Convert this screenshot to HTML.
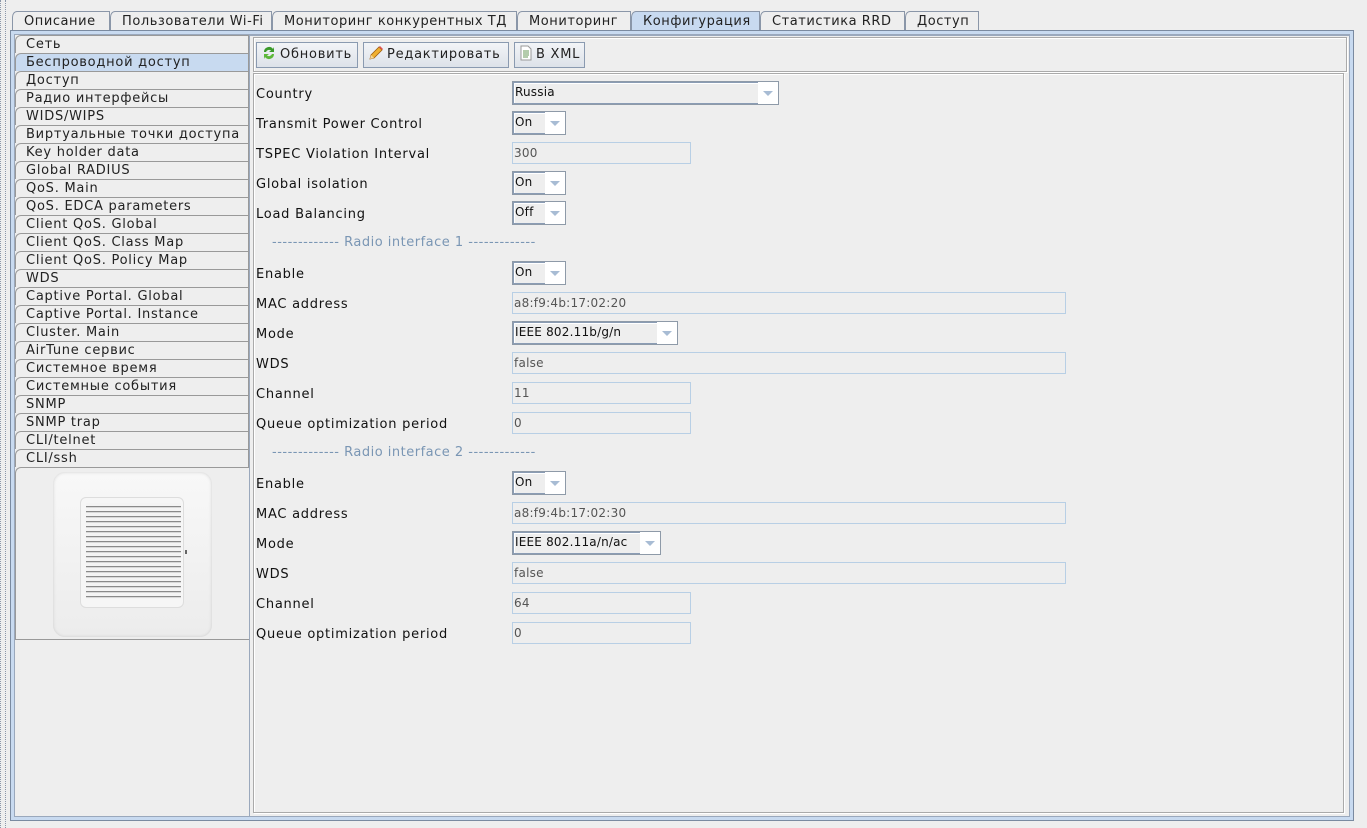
<!DOCTYPE html>
<html><head><meta charset="utf-8">
<style>
*{box-sizing:border-box;margin:0;padding:0}
body{width:1367px;height:828px;background:#eeeeee;position:relative;overflow:hidden;font-family:"DejaVu Sans","Liberation Sans",sans-serif;font-size:13px;color:#222;letter-spacing:0.75px}
.abs{position:absolute}
.dots{left:0;top:0;width:6px;height:828px;border-left:1px dotted #8a96a8;border-right:1px dotted #8a96a8}
.tab{position:absolute;top:11px;height:20px;border:1px solid #8a96a8;border-bottom:none;background:#eeeeee;font-size:13px;line-height:19px;padding-left:11px;white-space:nowrap;color:#222;border-top-left-radius:5px 6px;letter-spacing:0.55px;overflow:hidden}
.tab.sel{background:#c8daf0}
.frame{left:10px;top:30px;width:1344px;height:791px;border:1px solid #7a8aa0;background:#c8daf0}
.inner{left:14px;top:34px;width:1336px;height:783px;border:1px solid #9aa8bc;background:#eeeeee}
.tree{position:absolute;left:15px;height:18px;width:234px;border-top:1px solid #999;border-left:1px solid #999;border-right:1px solid #999;font-size:13px;line-height:17px;padding-left:10px;white-space:nowrap;border-top-left-radius:6px 6px}
.tree.sel{background:#c8daf0}
.btn{position:absolute;top:42px;height:26px;border:1px solid #8a9ab0;background:linear-gradient(#f2f4f7,#dde2e9);font-size:13px;line-height:24px;padding-left:4px;white-space:nowrap;letter-spacing:0.75px}
.btn svg{vertical-align:-3px;margin-right:3px}
.lbl{position:absolute;left:256px;font-size:13px;line-height:16px;color:#111}
.tf{position:absolute;left:512px;height:22px;border:1px solid #b8cfe5;background:#eeeeee;font-size:12px;line-height:20px;padding-left:1px;color:#555;letter-spacing:0.25px}
.cb{position:absolute;left:512px;height:24px;border:1px solid #8e9aa8;background:#fff;letter-spacing:0.2px}
.cb .t{position:absolute;left:0;top:0;bottom:0;border:1px solid #8a9cb4;border-right:1px solid #aaa;background:#eeeeee;font-size:12px;line-height:19px;padding-left:1px;color:#111;box-shadow:inset 1px 1px 0 #fff}
.cb .a{position:absolute;right:0;top:0;width:20px;height:22px;background:#fff}
.cb .a:after{content:"";position:absolute;left:5px;top:9px;border-left:5px solid transparent;border-right:5px solid transparent;border-top:5px solid #a8bcd4}
.sep{position:absolute;left:272px;font-size:13px;color:#7a96b4;white-space:pre;letter-spacing:0.5px}
</style></head><body>
<div class="abs dots"></div>

<div class="tab" style="left:12px;width:98px">Описание</div>
<div class="tab" style="left:110px;width:162px">Пользователи Wi-Fi</div>
<div class="tab" style="left:272px;width:245px">Мониторинг конкурентных ТД</div>
<div class="tab" style="left:517px;width:114px">Мониторинг</div>
<div class="tab sel" style="left:631px;width:129px">Конфигурация</div>
<div class="tab" style="left:760px;width:145px">Статистика RRD</div>
<div class="tab" style="left:905px;width:74px">Доступ</div>

<div class="abs frame"></div>
<div class="abs inner"></div>

<div class="tree" style="top:35px">Сеть</div>
<div class="tree sel" style="top:53px">Беспроводной доступ</div>
<div class="tree" style="top:71px">Доступ</div>
<div class="tree" style="top:89px">Радио интерфейсы</div>
<div class="tree" style="top:107px">WIDS/WIPS</div>
<div class="tree" style="top:125px">Виртуальные точки доступа</div>
<div class="tree" style="top:143px">Key holder data</div>
<div class="tree" style="top:161px">Global RADIUS</div>
<div class="tree" style="top:179px">QoS. Main</div>
<div class="tree" style="top:197px">QoS. EDCA parameters</div>
<div class="tree" style="top:215px">Client QoS. Global</div>
<div class="tree" style="top:233px">Client QoS. Class Map</div>
<div class="tree" style="top:251px">Client QoS. Policy Map</div>
<div class="tree" style="top:269px">WDS</div>
<div class="tree" style="top:287px">Captive Portal. Global</div>
<div class="tree" style="top:305px">Captive Portal. Instance</div>
<div class="tree" style="top:323px">Cluster. Main</div>
<div class="tree" style="top:341px">AirTune сервис</div>
<div class="tree" style="top:359px">Системное время</div>
<div class="tree" style="top:377px">Системные события</div>
<div class="tree" style="top:395px">SNMP</div>
<div class="tree" style="top:413px">SNMP trap</div>
<div class="tree" style="top:431px">CLI/telnet</div>
<div class="tree" style="top:449px">CLI/ssh</div>
<div class="abs" style="left:15px;top:467px;width:235px;height:173px;border-top:1px solid #999;border-left:1px solid #999;border-bottom:1px solid #999;border-top-left-radius:6px 6px"></div>
<div class="abs" style="left:53px;top:472px;width:159px;height:165px;border-radius:12px;background:linear-gradient(#f8f8f8,#ececec);box-shadow:inset 0 0 3px #ccc"></div>
<div class="abs" style="left:80px;top:497px;width:104px;height:111px;border-radius:6px;border:1px solid #ddd;background:#f6f6f6"></div>
<div class="abs" style="left:86px;top:503px;width:95px;height:96px;background:repeating-linear-gradient(#f4f4f4 0px,#f4f4f4 3px,#8a8a8a 3px,#8a8a8a 4px,#d8d8d8 4px,#d8d8d8 5px)"></div>
<div class="abs" style="left:185px;top:550px;width:2px;height:4px;background:#666"></div>

<div class="abs" style="left:249px;top:35px;width:1100px;height:782px;border:1px solid #9aa8bc;border-right:none"></div>
<div class="abs" style="left:253px;top:37px;width:1094px;height:35px;border:1px solid #aaa;box-shadow:inset 1px 1px 0 #fff,1px 1px 0 #fff"></div>
<div class="abs" style="left:253px;top:73px;width:1091px;height:740px;border:1px solid #aaa;box-shadow:1px 1px 0 #fff,inset 1px 1px 0 #fff"></div>

<div class="btn" style="left:256px;width:102px"><svg width="16" height="16" viewBox="0 0 16 16"><path d="M3 7a5 5 0 0 1 9-3l1-2v5h-5l2-1.5A3.3 3.3 0 0 0 5 7z" fill="#3a9a2a"/><path d="M13 9a5 5 0 0 1-9 3l-1 2V9h5l-2 1.5A3.3 3.3 0 0 0 11 9z" fill="#5cb83a"/></svg>Обновить</div>
<div class="btn" style="left:363px;width:146px"><svg width="16" height="16" viewBox="0 0 16 16"><path d="M2 14l1-4 8-8 3 3-8 8z" fill="#f0b030" stroke="#a06010" stroke-width=".8"/><path d="M2 14l1-4 3 3z" fill="#f4d8a0"/><path d="M11 2l3 3 1-1-3-3z" fill="#e05050"/></svg>Редактировать</div>
<div class="btn" style="left:514px;width:71px"><svg width="14" height="16" viewBox="0 0 14 16"><path d="M2 1h7l3 3v11H2z" fill="#fff" stroke="#999"/><path d="M4 6h6M4 8h6M4 10h6M4 12h5" stroke="#6a9a5a"/></svg>В XML</div>

<div class="lbl" style="top:87px">Country</div>
<div class="cb" style="top:81px;width:267px"><div class="t" style="width:247px">Russia</div><div class="a"></div></div>
<div class="lbl" style="top:117px">Transmit Power Control</div>
<div class="cb" style="top:111px;width:54px"><div class="t" style="width:34px">On</div><div class="a"></div></div>
<div class="lbl" style="top:147px">TSPEC Violation Interval</div>
<div class="tf" style="top:142px;width:179px">300</div>
<div class="lbl" style="top:177px">Global isolation</div>
<div class="cb" style="top:171px;width:54px"><div class="t" style="width:34px">On</div><div class="a"></div></div>
<div class="lbl" style="top:207px">Load Balancing</div>
<div class="cb" style="top:201px;width:54px"><div class="t" style="width:34px">Off</div><div class="a"></div></div>
<div class="sep" style="top:235px">------------- Radio interface 1 -------------</div>

<div class="lbl" style="top:267px">Enable</div>
<div class="cb" style="top:261px;width:54px"><div class="t" style="width:34px">On</div><div class="a"></div></div>
<div class="lbl" style="top:297px">MAC address</div>
<div class="tf" style="top:292px;width:554px">a8:f9:4b:17:02:20</div>
<div class="lbl" style="top:327px">Mode</div>
<div class="cb" style="top:321px;width:166px"><div class="t" style="width:146px">IEEE 802.11b/g/n</div><div class="a"></div></div>
<div class="lbl" style="top:357px">WDS</div>
<div class="tf" style="top:352px;width:554px">false</div>
<div class="lbl" style="top:387px">Channel</div>
<div class="tf" style="top:382px;width:179px">11</div>
<div class="lbl" style="top:417px">Queue optimization period</div>
<div class="tf" style="top:412px;width:179px">0</div>
<div class="sep" style="top:445px">------------- Radio interface 2 -------------</div>

<div class="lbl" style="top:477px">Enable</div>
<div class="cb" style="top:471px;width:54px"><div class="t" style="width:34px">On</div><div class="a"></div></div>
<div class="lbl" style="top:507px">MAC address</div>
<div class="tf" style="top:502px;width:554px">a8:f9:4b:17:02:30</div>
<div class="lbl" style="top:537px">Mode</div>
<div class="cb" style="top:531px;width:149px"><div class="t" style="width:129px">IEEE 802.11a/n/ac</div><div class="a"></div></div>
<div class="lbl" style="top:567px">WDS</div>
<div class="tf" style="top:562px;width:554px">false</div>
<div class="lbl" style="top:597px">Channel</div>
<div class="tf" style="top:592px;width:179px">64</div>
<div class="lbl" style="top:627px">Queue optimization period</div>
<div class="tf" style="top:622px;width:179px">0</div>
</body></html>
